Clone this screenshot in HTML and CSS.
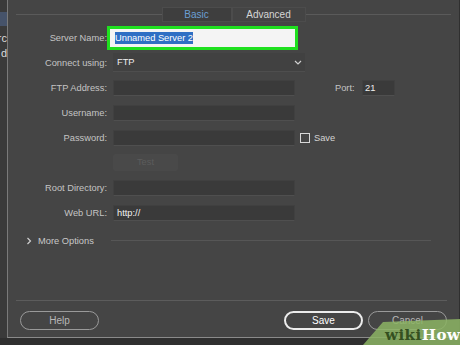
FILE: index.html
```html
<!DOCTYPE html>
<html lang="en">
<head>
    <meta charset="UTF-8">
    <title>Site Setup - Server</title>
    <link rel="stylesheet" href="styles.css">
</head>
<body>
<div class="sidebar">
    <div class="side-item selected"></div>
    <div class="side-item"><span>rc</span></div>
    <div class="side-item"><span>d</span></div>
</div>

<div class="dialog">
    <div class="tabbar">
        <div class="tab-line"></div>
        <div class="tab active">Basic</div>
        <div class="tab">Advanced</div>
        <div class="tab-line"></div>
    </div>

    <div class="form">
        <div class="row">
            <label>Server Name:</label>
            <div class="field highlighted"><span class="selection">Unnamed Server 2</span></div>
        </div>
        <div class="row">
            <label>Connect using:</label>
            <div class="select">
                <span>FTP</span>
                <svg width="8" height="5" viewBox="0 0 8 5"><path d="M1 1 L4 4 L7 1" fill="none" stroke="#d0d0d0" stroke-width="1.2"/></svg>
            </div>
        </div>
        <div class="row">
            <label>FTP Address:</label>
            <div class="field"></div>
            <span class="port-label">Port:</span>
            <div class="field port">21</div>
        </div>
        <div class="row">
            <label>Username:</label>
            <div class="field"></div>
        </div>
        <div class="row">
            <label>Password:</label>
            <div class="field"></div>
            <span class="checkbox"></span>
            <span class="check-label">Save</span>
        </div>
        <div class="row">
            <label></label>
            <div class="test-button">Test</div>
        </div>
        <div class="row">
            <label>Root Directory:</label>
            <div class="field"></div>
        </div>
        <div class="row">
            <label>Web URL:</label>
            <div class="field">http://</div>
        </div>
        <div class="more-options">
            <svg width="6" height="8" viewBox="0 0 6 8"><path d="M1.5 1 L4.5 4 L1.5 7" fill="none" stroke="#cfcfcf" stroke-width="1.2"/></svg>
            <span>More Options</span>
            <div class="more-line"></div>
        </div>
    </div>

    <div class="footer">
        <button class="btn">Help</button>
        <div class="spacer"></div>
        <button class="btn primary">Save</button>
        <button class="btn">Cancel</button>
    </div>
</div>

<div class="watermark"><span class="wiki">wiki</span><span class="how">How</span></div>
</body>
</html>
```

FILE: styles.css
```css
body {
    margin: 0;
    width: 460px;
    height: 345px;
    background-color: #2f2f2f;
    font-family: "Liberation Sans", Arial, sans-serif;
    font-size: 9.3px;
    color: #c4c4c4;
    display: flex;
    overflow: hidden;
    position: relative;
}

.sidebar {
    width: 7px;
    height: 338px;
    background-color: #3a3a3a;
    padding-top: 12px;
    box-sizing: border-box;
}

.side-item {
    height: 15px;
    overflow: hidden;
    display: flex;
    justify-content: flex-end;
    align-items: center;
    color: #dcdcdc;
    font-size: 11px;
}

.side-item.selected {
    background-color: #46536a;
    height: 14px;
    margin-bottom: 4px;
}

.dialog {
    width: 452px;
    height: 338px;
    box-sizing: border-box;
    background-color: #454545;
    border-left: 1px solid #7a7a7a;
    border-bottom: 1px solid #8a8a8a;
    padding: 8px 8px 7px 8px;
    display: flex;
    flex-direction: column;
}

/* tabs sitting on the group box line */
.tabbar {
    display: flex;
    align-items: center;
    height: 13px;
}

.tab-line {
    flex: 1;
    height: 1px;
    background-color: #5a5a5a;
}

.tab {
    height: 13px;
    line-height: 13px;
    text-align: center;
    background-color: #3e3e3e;
    border: 1px solid #4c4c4c;
    color: #d6d6d6;
    font-size: 10px;
}

.tab.active {
    width: 68px;
    color: #6b9fd3;
}

.tab:not(.active) {
    width: 72px;
    background-color: #444;
}

.form {
    margin-top: 4px;
}

.row {
    display: flex;
    align-items: center;
    height: 25px;
}

.row label {
    width: 97px;
    text-align: right;
    padding-right: 6px;
    box-sizing: border-box;
}

.field {
    width: 182px;
    height: 16px;
    box-sizing: border-box;
    background-color: #3a3a3a;
    border: 1px solid #404040;
    border-bottom-color: #4f4f4f;
    color: #f0f0f0;
    padding-left: 3px;
    line-height: 14px;
}

.field.highlighted {
    margin-left: -3px;
    width: 185px;
    height: 18px;
    background-color: #f4f4f4;
    outline: 3px solid #1fe01f;
    border: none;
    padding-left: 5px;
    line-height: 18px;
}

.selection {
    background-color: #2f6fc4;
    color: #ffffff;
    padding: 1px 0;
}

.select {
    width: 192px;
    height: 19px;
    box-sizing: border-box;
    background-color: #414141;
    border-bottom: 1px solid #4e4e4e;
    display: flex;
    align-items: center;
    justify-content: space-between;
    padding: 0 3px 0 4px;
    color: #f0f0f0;
}

.port-label {
    margin-left: 40px;
    width: 20px;
}

.field.port {
    margin-left: 7px;
    width: 33px;
    padding-left: 2px;
}

.checkbox {
    width: 8px;
    height: 8px;
    border: 1px solid #d8d8d8;
    margin-left: 5px;
}

.check-label {
    margin-left: 4px;
    color: #d4d4d4;
}

.test-button {
    width: 65px;
    height: 17px;
    line-height: 17px;
    text-align: center;
    background-color: #494949;
    border-radius: 2px;
    color: #5c5c5c;
}

.more-options {
    display: flex;
    align-items: center;
    height: 25px;
    margin-top: 3px;
    padding-left: 10px;
    color: #c8c8c8;
}

.more-options span {
    margin-left: 6px;
}

.more-line {
    height: 1px;
    width: 320px;
    margin-left: 17px;
    background-color: #565656;
}

.footer {
    margin-top: auto;
    border-top: 1px solid #5c5c5c;
    margin-right: 4px;
    padding: 10px 0 0 4px;
    height: 19px;
    display: flex;
    align-items: flex-start;
    gap: 5px;
}

.spacer {
    flex: 1;
}

.btn {
    width: 79px;
    height: 19px;
    border: 1px solid #9a9a9a;
    border-radius: 10px;
    background: transparent;
    color: #b8b8b8;
    font-family: "Liberation Sans", Arial, sans-serif;
    font-size: 10px;
    padding: 0;
}

.btn.primary {
    border: 2px solid #ececec;
    color: #ffffff;
}

/* wikiHow corner stamp */
.watermark {
    position: absolute;
    right: 0;
    bottom: 0;
    width: 97px;
    height: 26px;
    background-color: rgba(140, 180, 100, 0.85);
    clip-path: polygon(20px 3px, 100% 0, 100% 100%, 0 100%);
    font-family: "DejaVu Serif", serif;
    font-weight: bold;
    font-size: 15px;
    padding: 7px 0 0 22px;
    box-sizing: border-box;
    letter-spacing: 0.5px;
}

.wiki {
    color: #34501f;
}

.how {
    color: #ffffff;
}
```
